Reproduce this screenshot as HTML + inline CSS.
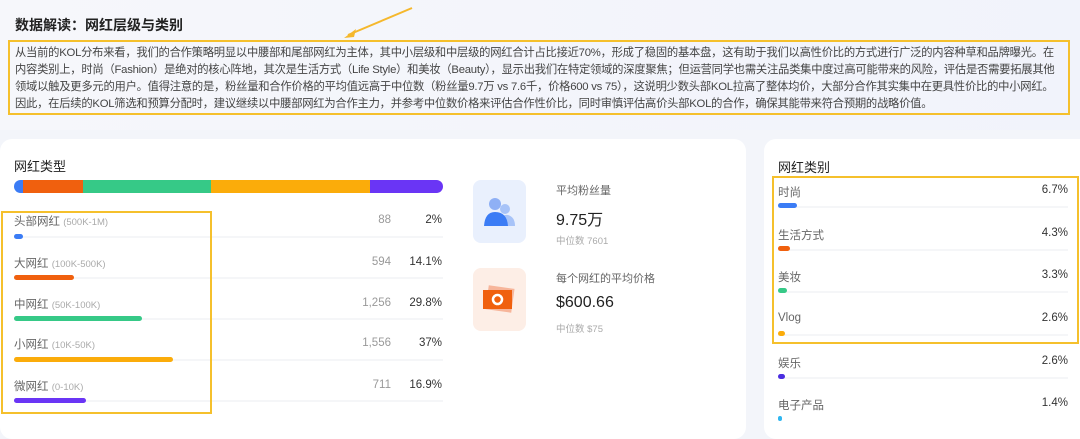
<!DOCTYPE html>
<html><head><meta charset="utf-8"><style>
*{margin:0;padding:0;box-sizing:border-box}
body{width:1080px;height:426px;overflow:hidden;background:#f3f5fa;font-family:"Liberation Sans","Noto Sans CJK SC",sans-serif;position:relative;color:#333}
.top{position:absolute;left:0;top:0;width:1080px;height:130px;background:linear-gradient(90deg,#f6f7fb,#f1f3fb)}
.h{position:absolute;left:15px;top:15px;font-size:14px;font-weight:bold;color:#222}
.box{position:absolute;left:8px;top:40px;width:1062px;height:75px;border:2px solid #f5c02c;padding:3px 5px;font-size:11.3px;line-height:17px;color:#444;letter-spacing:-0.24px}
.card{position:absolute;background:#fff;border-radius:12px}
.ab{position:absolute}
.t{font-size:13px;color:#222}
.lab{font-size:11.5px;color:#666}.lab small{font-size:9.5px;color:#aaa}
.bar{position:absolute;height:5px;border-radius:3px}
.track{position:absolute;height:2px;background:#f5f6f8}
.num{font-size:11.5px;color:#999;text-align:right}
.pct{font-size:11.5px;color:#333;text-align:right}
.yb{position:absolute;border:2px solid #f5c02c}
</style></head><body>
<div class="top"></div>
<div class="h">数据解读：网红层级与类别</div>
<svg class="ab" style="left:340px;top:5px" width="75" height="36"><line x1="72" y1="3" x2="8" y2="30" stroke="#f5b82c" stroke-width="2"/><path d="M4 33 L16 24 L14 32 Z" fill="#f5b82c"/></svg>
<div class="box">从当前的KOL分布来看，我们的合作策略明显以中腰部和尾部网红为主体，其中小层级和中层级的网红合计占比接近70%，形成了稳固的基本盘，这有助于我们以高性价比的方式进行广泛的内容种草和品牌曝光。在内容类别上，时尚（Fashion）是绝对的核心阵地，其次是生活方式（Life Style）和美妆（Beauty），显示出我们在特定领域的深度聚焦；但运营同学也需关注品类集中度过高可能带来的风险，评估是否需要拓展其他领域以触及更多元的用户。值得注意的是，粉丝量和合作价格的平均值远高于中位数（粉丝量9.7万 vs 7.6千，价格600 vs 75），这说明少数头部KOL拉高了整体均价，大部分合作其实集中在更具性价比的中小网红。因此，在后续的KOL筛选和预算分配时，建议继续以中腰部网红为合作主力，并参考中位数价格来评估合作性价比，同时审慎评估高价头部KOL的合作，确保其能带来符合预期的战略价值。</div>

<div class="card" style="left:0;top:139px;width:746px;height:300px"></div>
<div class="card" style="left:764px;top:139px;width:330px;height:300px"></div>

<div class="ab t" style="left:14px;top:156px">网红类型</div>
<div class="ab" style="left:14px;top:180px;width:429px;height:13px;border-radius:7px;overflow:hidden;display:flex">
<div style="width:9px;background:#3b7cf5"></div><div style="width:60px;background:#f0600e"></div><div style="width:128px;background:#36c987"></div><div style="width:159px;background:#fbac0a"></div><div style="flex:1;background:#6a35f5"></div></div>

<div class="ab lab" style="left:14px;top:213px">头部网红 <small>(500K-1M)</small></div>
<div class="track" style="left:14px;top:236px;width:429px"></div><div class="bar" style="left:14px;top:234px;width:9px;background:#3b7cf5"></div>
<div class="ab num" style="left:330px;top:214px;width:61px">88</div><div class="ab pct" style="left:400px;top:214px;width:42px">2%</div>

<div class="ab lab" style="left:14px;top:255px">大网红 <small>(100K-500K)</small></div>
<div class="track" style="left:14px;top:277px;width:429px"></div><div class="bar" style="left:14px;top:275px;width:60px;background:#f0600e"></div>
<div class="ab num" style="left:330px;top:256px;width:61px">594</div><div class="ab pct" style="left:400px;top:256px;width:42px">14.1%</div>

<div class="ab lab" style="left:14px;top:296px">中网红 <small>(50K-100K)</small></div>
<div class="track" style="left:14px;top:318px;width:429px"></div><div class="bar" style="left:14px;top:316px;width:128px;background:#36c987"></div>
<div class="ab num" style="left:330px;top:297px;width:61px">1,256</div><div class="ab pct" style="left:400px;top:297px;width:42px">29.8%</div>

<div class="ab lab" style="left:14px;top:336px">小网红 <small>(10K-50K)</small></div>
<div class="track" style="left:14px;top:359px;width:429px"></div><div class="bar" style="left:14px;top:357px;width:159px;background:#fbac0a"></div>
<div class="ab num" style="left:330px;top:337px;width:61px">1,556</div><div class="ab pct" style="left:400px;top:337px;width:42px">37%</div>

<div class="ab lab" style="left:14px;top:378px">微网红 <small>(0-10K)</small></div>
<div class="track" style="left:14px;top:400px;width:429px"></div><div class="bar" style="left:14px;top:398px;width:72px;background:#6a35f5"></div>
<div class="ab num" style="left:330px;top:379px;width:61px">711</div><div class="ab pct" style="left:400px;top:379px;width:42px">16.9%</div>
<div class="yb" style="left:1px;top:211px;width:211px;height:203px"></div>

<div class="ab" style="left:473px;top:180px;width:53px;height:63px;border-radius:8px;background:#e9f0fd"></div>
<svg class="ab" style="left:482px;top:196px" width="36" height="32"><circle cx="23" cy="13" r="5" fill="#a7c3f8"/><path d="M16 30 Q18 18 26 19 Q33 21 33 30 Z" fill="#a7c3f8"/><circle cx="13" cy="8" r="6" fill="#8fb0f5"/><path d="M2 30 Q3 16 13 16 Q25 16 26 30 Z" fill="#3b7cf5"/></svg>
<div class="ab" style="left:473px;top:268px;width:53px;height:63px;border-radius:8px;background:#fdeee6"></div>
<svg class="ab" style="left:482px;top:285px" width="34" height="30"><rect x="5" y="2" width="26" height="24" fill="#f7b59a" transform="rotate(8 18 14)"/><rect x="1" y="5" width="29" height="19" fill="#f0600e"/><circle cx="15.5" cy="14.5" r="4.5" fill="none" stroke="#fff" stroke-width="2.5"/></svg>
<div class="ab" style="left:556px;top:182px;font-size:11px;color:#666">平均粉丝量</div>
<div class="ab" style="left:556px;top:206px;font-size:16px;color:#222">9.75万</div>
<div class="ab" style="left:556px;top:233px;font-size:9.5px;color:#aaa">中位数 7601</div>
<div class="ab" style="left:556px;top:270px;font-size:11px;color:#666">每个网红的平均价格</div>
<div class="ab" style="left:556px;top:294px;font-size:16px;color:#222">$600.66</div>
<div class="ab" style="left:556px;top:321px;font-size:9.5px;color:#aaa">中位数 $75</div>

<div class="ab t" style="left:778px;top:157px">网红类别</div>
<div class="ab lab" style="left:778px;top:184px">时尚</div><div class="ab pct" style="left:1010px;top:184px;width:58px">6.7%</div>
<div class="track" style="left:778px;top:206px;width:290px"></div><div class="bar" style="left:778px;top:203px;width:19px;background:#3b7cf5"></div>
<div class="ab lab" style="left:778px;top:227px">生活方式</div><div class="ab pct" style="left:1010px;top:227px;width:58px">4.3%</div>
<div class="track" style="left:778px;top:249px;width:290px"></div><div class="bar" style="left:778px;top:246px;width:12px;background:#f0600e"></div>
<div class="ab lab" style="left:778px;top:269px">美妆</div><div class="ab pct" style="left:1010px;top:269px;width:58px">3.3%</div>
<div class="track" style="left:778px;top:291px;width:290px"></div><div class="bar" style="left:778px;top:288px;width:9px;background:#36c987"></div>
<div class="ab lab" style="left:778px;top:312px">Vlog</div><div class="ab pct" style="left:1010px;top:312px;width:58px">2.6%</div>
<div class="track" style="left:778px;top:334px;width:290px"></div><div class="bar" style="left:778px;top:331px;width:7px;background:#fbac0a"></div>
<div class="yb" style="left:772px;top:176px;width:307px;height:168px"></div>
<div class="ab lab" style="left:778px;top:355px">娱乐</div><div class="ab pct" style="left:1010px;top:355px;width:58px">2.6%</div>
<div class="track" style="left:778px;top:377px;width:290px"></div><div class="bar" style="left:778px;top:374px;width:7px;background:#4a2de0"></div>
<div class="ab lab" style="left:778px;top:397px">电子产品</div><div class="ab pct" style="left:1010px;top:397px;width:58px">1.4%</div>
<div class="bar" style="left:778px;top:416px;width:4px;background:#2fb6f0"></div>
</body></html>
